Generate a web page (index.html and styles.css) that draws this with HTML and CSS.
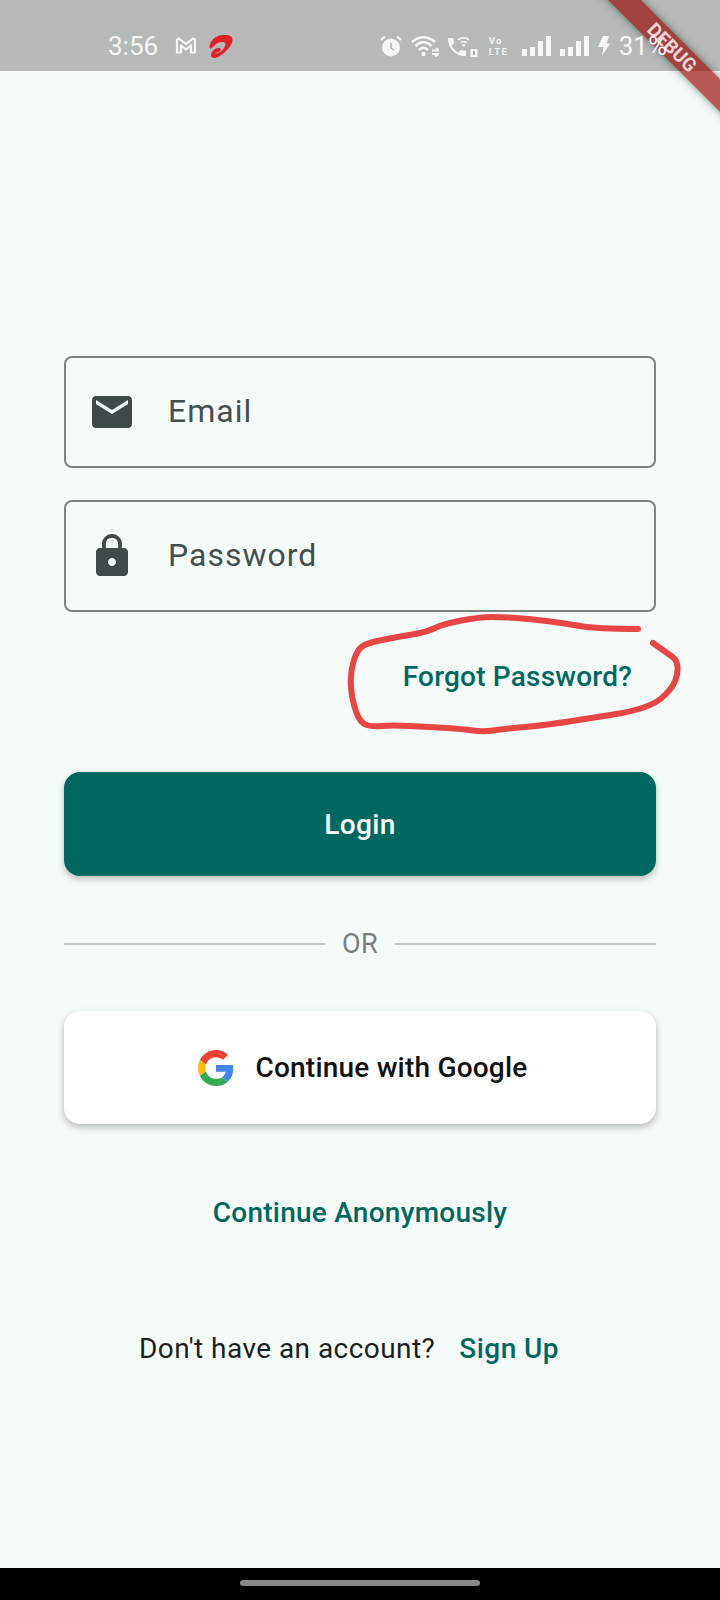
FILE: index.html

```html
<!DOCTYPE html>
<html lang="en">
<head>
    <meta charset="UTF-8">
    <meta name="viewport" content="width=device-width, initial-scale=1.0">
    <title>Login</title>
    <link rel="stylesheet" href="styles.css">
</head>
<body>
    <div class="page">
        <div class="status-bar">
            <div class="status-left">
                <span class="status-time">3:56</span>
                <svg class="icon-gmail" viewBox="0 0 22 18"><path d="M2 2.5V15.5H6V8.5L11 12.5L16 8.5V15.5H20V2.5L18 1.5L11 7L4 1.5Z" fill="none" stroke="#f5f6f5" stroke-width="2.2" stroke-linejoin="round"/></svg>
                <svg class="icon-airtel" viewBox="0 0 26 26"><path d="M1.5 14C2 7 8 2.5 15 2C21 1.5 25 3 24.5 7.5C24 13 17 20 11 23.5C7.5 25.5 3.5 25.5 3 22.5C2.7 19.5 6 15.5 10 15C13 14.8 13.5 17 11.5 18.5C10 19.5 8.5 19.5 7.5 20.5C11 21.5 17.5 15 17.5 11C17.5 8.5 13 8.5 9.5 10C7 11.2 4.5 15.5 2.5 15.5C1.8 15.5 1.5 15 1.5 14Z" fill="#e3202a"/></svg>
            </div>
            <div class="status-right">
                <svg class="icon-alarm" viewBox="0 0 22 22"><circle cx="11" cy="12.5" r="9" fill="#f5f6f5"/><path d="M11 8V13L14 15" fill="none" stroke="#a9adab" stroke-width="1.4"/><path d="M1 5L5 1.5M21 5L17 1.5" stroke="#f5f6f5" stroke-width="2"/></svg>
                <svg class="icon-wifi" viewBox="0 0 28 22"><path d="M1 7C8 0.5 17 0.5 24 7M4.5 11C9.5 6 15.5 6 20.5 11M8 15C11 12 14 12 17 15" fill="none" stroke="#f5f6f5" stroke-width="2.5"/><circle cx="12.5" cy="19" r="2.3" fill="#f5f6f5"/><path d="M21 15.5H28L25 13M21 19H28L24 21.5" fill="none" stroke="#f5f6f5" stroke-width="1.8"/></svg>
                <svg class="icon-call" viewBox="0 0 32 22"><path transform="translate(-3 0)" d="M6.62 10.79c1.44 2.83 3.76 5.14 6.59 6.59l2.2-2.2c.27-.27.67-.36 1.02-.24 1.12.37 2.33.57 3.57.57.55 0 1 .45 1 1V20c0 .55-.45 1-1 1-9.39 0-17-7.61-17-17 0-.55.45-1 1-1h3.5c.55 0 1 .45 1 1 0 1.25.2 2.45.57 3.57.11.35.03.74-.25 1.02l-2.2 2.2z" fill="#f5f6f5"/><path d="M10 5C13 2 18 2 21 5M12.5 8C14.5 6.2 16.5 6.2 18.5 8" fill="none" stroke="#f5f6f5" stroke-width="1.6"/><circle cx="15.5" cy="10.5" r="1.4" fill="#f5f6f5"/><rect x="22.5" y="14" width="7" height="8" fill="#f5f6f5"/><rect x="25" y="16" width="2" height="4" fill="#a9adab"/></svg>
                <span class="status-volte">Vo<br>LTE</span>
                <span class="signal"><i class="bar-1"></i><i class="bar-2"></i><i class="bar-3"></i><i class="bar-4"></i></span>
                <span class="signal"><i class="bar-1"></i><i class="bar-2"></i><i class="bar-3"></i><i class="bar-4"></i></span>
                <svg class="icon-bolt" viewBox="0 0 12 20"><path d="M5 0H11L8.5 7.5H12L4 20L5.5 11H0Z" fill="#f5f6f5"/></svg>
                <span class="status-battery">31%</span>
            </div>
        </div>

        <div class="debug-banner">DEBUG</div>

        <form class="login">
            <label class="field">
                <svg class="field-icon" viewBox="0 0 24 24"><path d="M20 4H4c-1.1 0-1.99.9-1.99 2L2 18c0 1.1.9 2 2 2h16c1.1 0 2-.9 2-2V6c0-1.1-.9-2-2-2zm0 4l-8 5-8-5V6l8 5 8-5v2z"/></svg>
                <span class="field-label">Email</span>
            </label>
            <label class="field field-password">
                <svg class="field-icon" viewBox="0 0 24 24"><path d="M18 8h-1V6c0-2.76-2.24-5-5-5S7 3.24 7 6v2H6c-1.1 0-2 .9-2 2v10c0 1.1.9 2 2 2h12c1.1 0 2-.9 2-2V10c0-1.1-.9-2-2-2zm-6 9c-1.1 0-2-.9-2-2s.9-2 2-2 2 .9 2 2-.9 2-2 2zm3.1-9H8.9V6c0-1.71 1.39-3.1 3.1-3.1 1.71 0 3.1 1.39 3.1 3.1v2z"/></svg>
                <span class="field-label">Password</span>
            </label>

            <div class="forgot-row"><a class="link forgot">Forgot Password?</a></div>

            <button type="button" class="btn-login">Login</button>

            <div class="divider"><span class="divider-line"></span><span class="divider-text">OR</span><span class="divider-line"></span></div>

            <button type="button" class="btn-google">
                <svg class="google-logo" viewBox="0 0 48 48">
                    <path fill="#EA4335" d="M24 9.5c3.54 0 6.71 1.22 9.21 3.6l6.85-6.85C35.9 2.38 30.47 0 24 0 14.62 0 6.51 5.38 2.56 13.22l7.98 6.19C12.43 13.72 17.74 9.5 24 9.5z"/>
                    <path fill="#4285F4" d="M46.98 24.55c0-1.57-.15-3.09-.38-4.55H24v9.02h12.94c-.58 2.96-2.26 5.48-4.78 7.18l7.73 6c4.51-4.18 7.09-10.36 7.09-17.65z"/>
                    <path fill="#FBBC05" d="M10.53 28.59c-.48-1.45-.76-2.99-.76-4.59s.27-3.14.76-4.59l-7.98-6.19C.92 16.46 0 20.12 0 24c0 3.88.92 7.54 2.56 10.78l7.97-6.19z"/>
                    <path fill="#34A853" d="M24 48c6.48 0 11.93-2.13 15.89-5.81l-7.73-6c-2.15 1.45-4.92 2.3-8.16 2.3-6.26 0-11.57-4.22-13.47-9.91l-7.98 6.19C6.51 42.62 14.62 48 24 48z"/>
                </svg>
                <span>Continue with Google</span>
            </button>

            <a class="link anonymous">Continue Anonymously</a>

            <p class="signup"><span>Don't have an account?</span><a class="link signup-link">Sign Up</a></p>
        </form>

        <div class="nav-bar"><span class="nav-pill"></span></div>

        <!-- red pen mark drawn over the screenshot -->
        <svg class="scribble" viewBox="0 0 720 1600"><path d="M638 629Q597 629 580 626Q563 623 546.5 621Q530 619 516.5 618Q503 617 491.5 617Q480 617 461.5 620.5Q443 624 435 628Q427 632 412 634.5Q397 637 382 640Q367 643 362 646.5Q357 650 353.5 661.5Q350 673 351 686.5Q352 700 356 711.5Q360 723 366.5 725Q373 727 381.5 726Q390 725 410 726Q430 727 446.5 728Q463 729 473 730.5Q483 732 493 730.5Q503 729 525 727Q547 725 572 721Q597 717 613.5 714.5Q630 712 643.5 707.5Q657 703 665 695Q673 687 675.5 680Q678 673 677.5 666.5Q677 660 672 656.5Q667 653 653 643"/></svg>
    </div>
</body>
</html>
```

FILE: styles.css

```css
body {
    margin: 0;
    font-family: Roboto, "Liberation Sans", sans-serif;
    background: #f5fbf9;
}
button {
    font-family: inherit;
    border: none;
    padding: 0;
    cursor: pointer;
}
.page {
    position: relative;
    width: 720px;
    height: 1600px;
    overflow: hidden;
    display: flex;
    flex-direction: column;
}

/* status bar */
.status-bar {
    height: 71px;
    box-sizing: border-box;
    padding: 21px 53px 0 108px;
    background: #b5b9b7;
    display: flex;
    justify-content: space-between;
    align-items: center;
    color: #f5f6f5;
    font-size: 26px;
}
.status-left, .status-right {
    position: relative;
    z-index: 2;
    display: flex;
    align-items: center;
}
.status-right {
    gap: 9px;
}
.status-time {
    margin-right: 17px;
}
.icon-gmail {
    width: 22px;
    height: 18px;
    margin-right: 11px;
}
.icon-airtel {
    width: 26px;
    height: 26px;
}
.icon-alarm {
    width: 22px;
    height: 22px;
}
.icon-wifi {
    width: 28px;
    height: 22px;
}
.icon-call {
    width: 32px;
    height: 22px;
}
.icon-bolt {
    width: 12px;
    height: 20px;
}
.status-volte {
    width: 24px;
    font-size: 9.5px;
    font-weight: 700;
    letter-spacing: 1.4px;
    line-height: 11.2px;
}
.signal {
    width: 29px;
    height: 20px;
    display: flex;
    align-items: flex-end;
    justify-content: space-between;
}
.signal i {
    width: 5px;
    background: #f5f6f5;
}
.bar-1 { height: 7px; }
.bar-2 { height: 9px; }
.bar-3 { height: 15px; }
.bar-4 { height: 20px; }

/* flutter debug ribbon */
.debug-banner {
    position: absolute;
    z-index: 1;
    left: 572px;
    top: 36px;
    width: 200px;
    height: 23px;
    transform: rotate(45deg);
    background: rgba(150, 0, 0, 0.65);
    box-shadow: 0 0 8px rgba(0, 0, 0, 0.45);
    color: #eed6d6;
    font-size: 19px;
    font-weight: 700;
    line-height: 23px;
    text-align: center;
}

/* form */
.login {
    flex: 1;
    padding: 285px 64px 0;
    display: flex;
    flex-direction: column;
}
.field {
    height: 112px;
    box-sizing: border-box;
    border: 2px solid #7c8684;
    border-radius: 8px;
    padding-left: 22px;
    display: flex;
    align-items: center;
    gap: 32px;
}
.field-password {
    margin-top: 32px;
}
.field-icon {
    width: 48px;
    height: 48px;
    fill: #3f4a49;
}
.field-label {
    padding-bottom: 2px;
    font-size: 32px;
    letter-spacing: 1px;
    color: #454f4e;
}
.link {
    color: #00695f;
    font-weight: 500;
}
.forgot-row {
    height: 50px;
    margin-top: 39px;
    display: flex;
    justify-content: flex-end;
    padding-right: 24px;
    align-items: center;
    font-size: 28px;
    letter-spacing: 0.2px;
}
.btn-login {
    margin-top: 71px;
    height: 104px;
    background: #00695f;
    color: #fff;
    border-radius: 16px;
    font-size: 28px;
    font-weight: 500;
    letter-spacing: 0.4px;
    box-shadow: 0 3px 6px rgba(0, 0, 0, 0.25);
}
.divider {
    margin-top: 52px;
    display: flex;
    align-items: center;
    gap: 17px;
    color: #7a7f7d;
    font-size: 27px;
    letter-spacing: 0.5px;
}
.divider-line {
    flex: 1;
    height: 2px;
    background: #c3c9c7;
}
.btn-google {
    margin-top: 51px;
    height: 113px;
    padding-left: 5px;
    background: #fff;
    color: #111;
    border-radius: 16px;
    font-size: 28px;
    font-weight: 500;
    letter-spacing: 0.2px;
    box-shadow: 0 3px 7px rgba(0, 0, 0, 0.28);
    display: flex;
    align-items: center;
    justify-content: center;
    gap: 22px;
}
.google-logo {
    width: 36px;
    height: 36px;
}
.anonymous {
    margin-top: 72px;
    text-align: center;
    font-size: 28px;
    letter-spacing: 0.25px;
}
.signup {
    margin: 103px 0 0;
    padding-right: 22px;
    display: flex;
    justify-content: center;
    gap: 24px;
    font-size: 28px;
    letter-spacing: 0.45px;
    color: #1b1f1e;
}

/* nav bar */
.nav-bar {
    height: 32px;
    background: #000;
    display: flex;
    justify-content: center;
    padding-top: 12px;
    box-sizing: border-box;
}
.nav-pill {
    width: 240px;
    height: 6px;
    border-radius: 3px;
    background: #8a8a8a;
}

.scribble {
    position: absolute;
    left: 0;
    top: 0;
    width: 720px;
    height: 1600px;
    fill: none;
    stroke: #e84545;
    stroke-width: 6;
    stroke-linecap: round;
    stroke-linejoin: round;
    pointer-events: none;
}
```
